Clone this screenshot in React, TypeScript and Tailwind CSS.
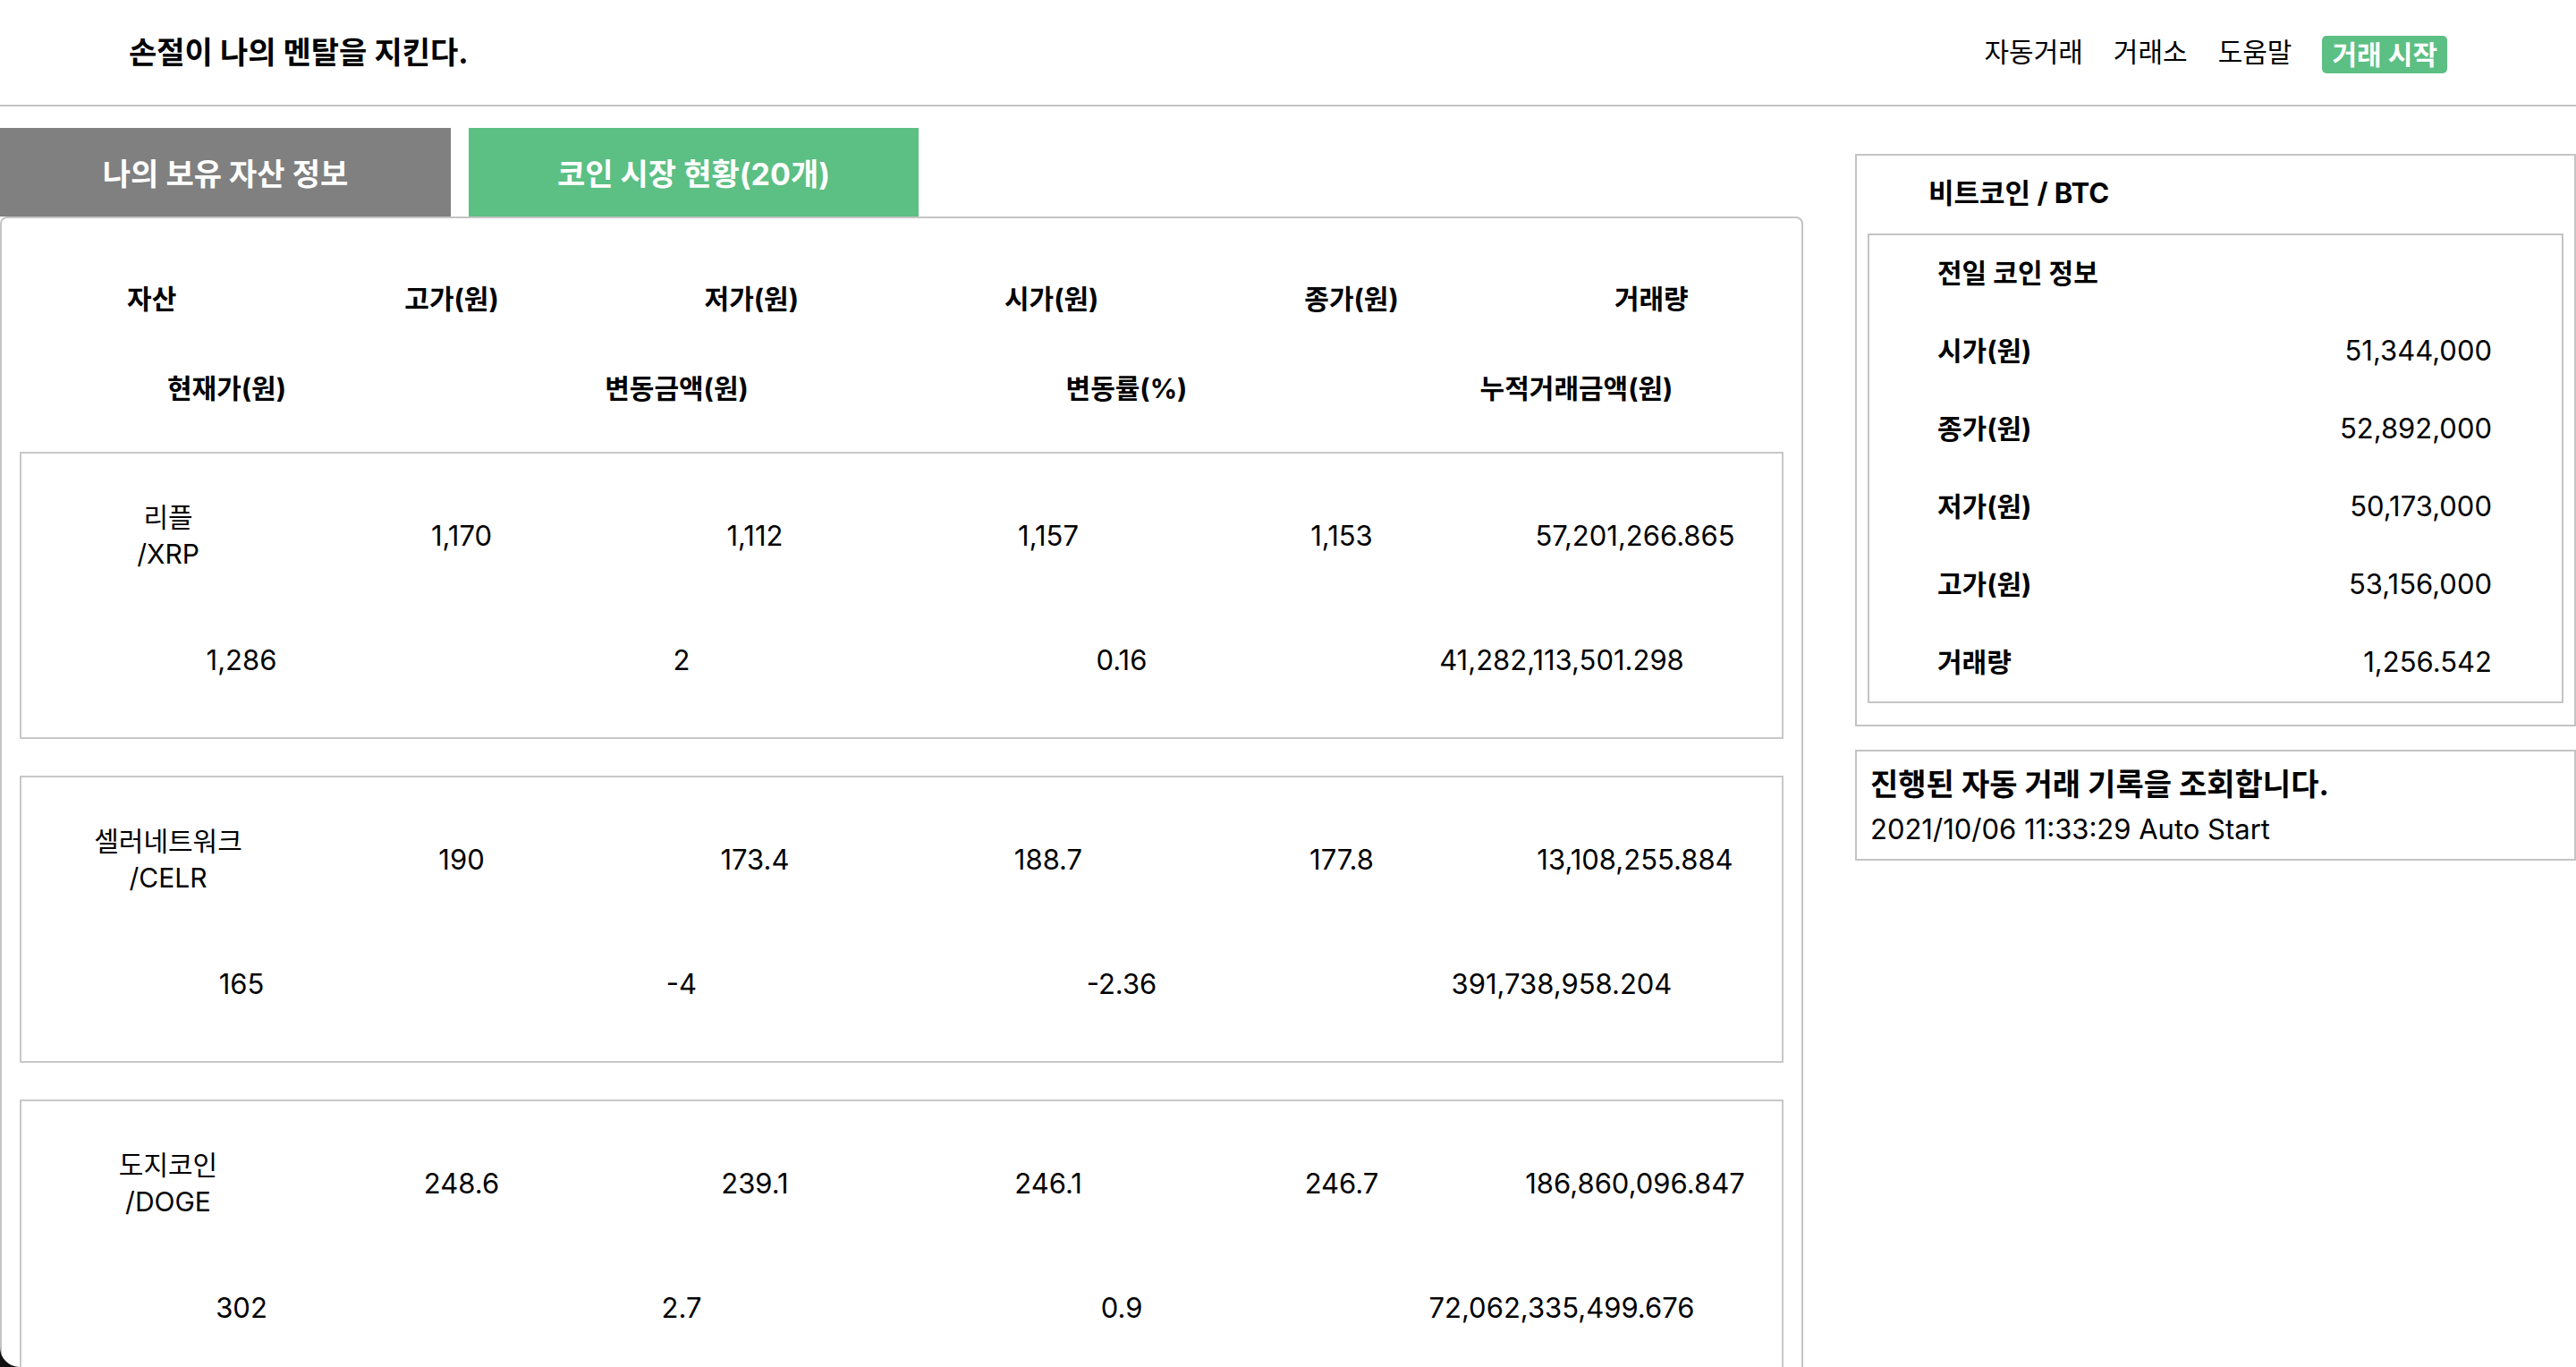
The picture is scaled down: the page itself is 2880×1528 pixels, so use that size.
import React from "react";

type Coin = {
  name: string;
  symbol: string;
  high: string;
  low: string;
  open: string;
  close: string;
  volume: string;
  price: string;
  change: string;
  rate: string;
  acc: string;
};

const coins: Coin[] = [
  {
    name: "리플",
    symbol: "/XRP",
    high: "1,170",
    low: "1,112",
    open: "1,157",
    close: "1,153",
    volume: "57,201,266.865",
    price: "1,286",
    change: "2",
    rate: "0.16",
    acc: "41,282,113,501.298",
  },
  {
    name: "셀러네트워크",
    symbol: "/CELR",
    high: "190",
    low: "173.4",
    open: "188.7",
    close: "177.8",
    volume: "13,108,255.884",
    price: "165",
    change: "-4",
    rate: "-2.36",
    acc: "391,738,958.204",
  },
  {
    name: "도지코인",
    symbol: "/DOGE",
    high: "248.6",
    low: "239.1",
    open: "246.1",
    close: "246.7",
    volume: "186,860,096.847",
    price: "302",
    change: "2.7",
    rate: "0.9",
    acc: "72,062,335,499.676",
  },
];

const prevInfo = [
  ["시가(원)", "51,344,000"],
  ["종가(원)", "52,892,000"],
  ["저가(원)", "50,173,000"],
  ["고가(원)", "53,156,000"],
  ["거래량", "1,256.542"],
];

function CoinCard({ c }: { c: Coin }) {
  return (
    <div className="h-[321px] border-2 border-[#c8c8c8] pt-[51px]">
      <div className="grid h-[80px] grid-cols-6 items-center text-center text-[31px]">
        <div className="text-[30px] leading-[41px]">
          <div>{c.name}</div>
          <div>{c.symbol}</div>
        </div>
        <div>{c.high}</div>
        <div>{c.low}</div>
        <div>{c.open}</div>
        <div>{c.close}</div>
        <div>{c.volume}</div>
      </div>
      <div className="mt-[60px] grid h-[80px] grid-cols-4 items-center text-center text-[31px]">
        <div>{c.price}</div>
        <div>{c.change}</div>
        <div>{c.rate}</div>
        <div>{c.acc}</div>
      </div>
    </div>
  );
}

export default function App() {
  return (
    <div className="relative h-[1528px] overflow-hidden bg-white font-['Inter','Noto_Sans_CJK_KR',sans-serif] text-black">
      <header className="flex h-[119px] items-center justify-between border-b-2 border-[#c4c4c4] px-[144px]">
        <h1 className="text-[34px] font-bold">손절이 나의 멘탈을 지킨다.</h1>
        <nav className="flex items-center gap-[34px] text-[30px]">
          <span>자동거래</span>
          <span>거래소</span>
          <span>도움말</span>
          <button className="mt-[4px] h-[42px] rounded-[5px] bg-[#5cbf83] px-[11px] text-[30px] font-bold leading-[42px] text-white">
            거래 시작
          </button>
        </nav>
      </header>

      <div className="flex">
        <main className="w-[2016px] shrink-0 pt-[24px]">
          <div className="flex gap-[20px]">
            <div className="flex h-[99px] w-[504px] items-center justify-center bg-[#808080] pt-[3px] text-[34px] font-bold text-white">
              나의 보유 자산 정보
            </div>
            <div className="flex h-[99px] w-[503px] items-center justify-center bg-[#5cbf83] pt-[3px] text-[34px] font-bold text-white">
              코인 시장 현황(20개)
            </div>
          </div>
          <section className="rounded-t-[8px] border-2 border-[#c4c4c4] pb-[40px]">
            <div className="mt-[40px] grid h-[100px] grid-cols-6 items-center text-center text-[30px] font-bold">
              <div>자산</div>
              <div>고가(원)</div>
              <div>저가(원)</div>
              <div>시가(원)</div>
              <div>종가(원)</div>
              <div>거래량</div>
            </div>
            <div className="grid h-[100px] grid-cols-4 items-center text-center text-[30px] font-bold">
              <div>현재가(원)</div>
              <div>변동금액(원)</div>
              <div>변동률(%)</div>
              <div>누적거래금액(원)</div>
            </div>
            <div className="mx-[20px] mt-[21px] flex flex-col gap-[41px]">
              {coins.map((c) => (
                <CoinCard key={c.symbol} c={c} />
              ))}
            </div>
          </section>
        </main>

        <aside className="ml-[58px] flex-1 pt-[53px]">
          <div className="border-2 border-[#c4c4c4] pb-[24px]">
            <div className="mt-[20px] h-[44px] pl-[80px] text-[31px] font-bold leading-[44px]">
              비트코인 / BTC
            </div>
            <div className="mx-[12px] mt-[23px] border-2 border-[#c4c4c4]">
              <div className="mt-[20px] h-[44px] pl-[76px] text-[30px] font-bold leading-[44px]">
                전일 코인 정보
              </div>
              <div className="mt-[22px]">
                {prevInfo.map(([k, v]) => (
                  <div
                    key={k}
                    className="flex h-[87px] items-center justify-between pl-[76px] pr-[78px] text-[30px]"
                  >
                    <span className="font-bold">{k}</span>
                    <span className="text-[31px]">{v}</span>
                  </div>
                ))}
              </div>
            </div>
          </div>
          <div className="mt-[26px] border-2 border-[#c4c4c4] pb-[13px] pl-[15px] pt-[15px]">
            <div className="text-[34px] font-bold leading-[44px]">진행된 자동 거래 기록을 조회합니다.</div>
            <div className="mt-[8px] text-[31px] leading-[40px]">2021/10/06 11:33:29 Auto Start</div>
          </div>
        </aside>
      </div>

      <svg
        className="absolute bottom-0 left-0"
        width="22"
        height="22"
        viewBox="0 0 22 22"
      >
        <path d="M0 0 L0 22 L22 22 A22 22 0 0 1 0 0 Z" fill="#111" />
      </svg>
    </div>
  );
}
